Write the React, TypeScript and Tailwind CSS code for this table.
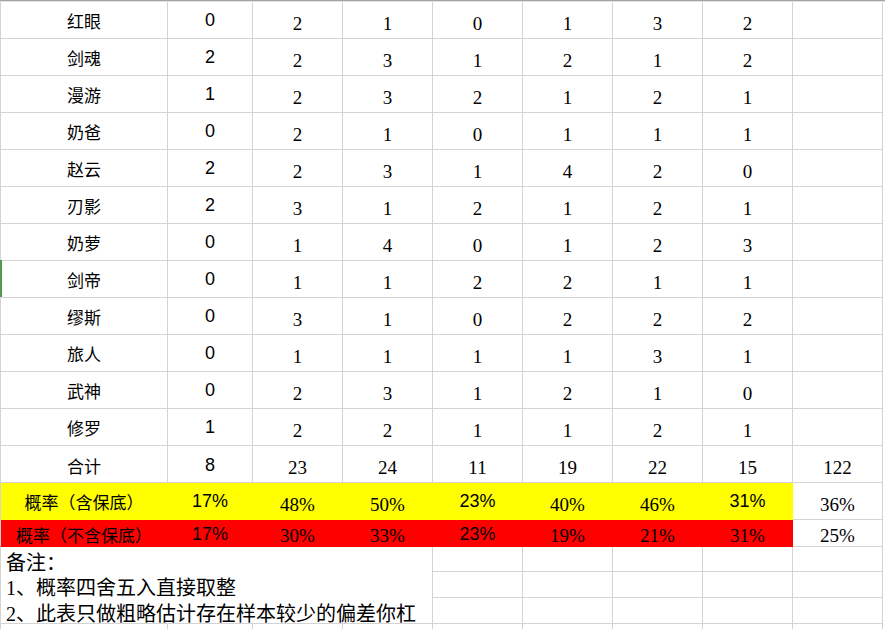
import React from "react";

const COLW = [
  "w-[168px]",
  "w-[85px]",
  "w-[90px]",
  "w-[90px]",
  "w-[90px]",
  "w-[90px]",
  "w-[90px]",
  "w-[90px]",
  "w-[90px]",
];

const CJK = "font-['Noto_Sans_CJK_SC','Noto_Sans',sans-serif]";
const SANS = "font-['Liberation_Sans','Noto_Sans_CJK_SC',sans-serif]";
const SERIF = "font-['Liberation_Serif','Noto_Sans_CJK_SC',serif]";

type Row = { name: string; vals: (number | string)[] };

const rows: Row[] = [
  { name: "红眼", vals: [0, 2, 1, 0, 1, 3, 2] },
  { name: "剑魂", vals: [2, 2, 3, 1, 2, 1, 2] },
  { name: "漫游", vals: [1, 2, 3, 2, 1, 2, 1] },
  { name: "奶爸", vals: [0, 2, 1, 0, 1, 1, 1] },
  { name: "赵云", vals: [2, 2, 3, 1, 4, 2, 0] },
  { name: "刃影", vals: [2, 3, 1, 2, 1, 2, 1] },
  { name: "奶萝", vals: [0, 1, 4, 0, 1, 2, 3] },
  { name: "剑帝", vals: [0, 1, 1, 2, 2, 1, 1] },
  { name: "缪斯", vals: [0, 3, 1, 0, 2, 2, 2] },
  { name: "旅人", vals: [0, 1, 1, 1, 1, 3, 1] },
  { name: "武神", vals: [0, 2, 3, 1, 2, 1, 0] },
  { name: "修罗", vals: [1, 2, 2, 1, 1, 2, 1] },
];

function Cell({
  col,
  h,
  children,
  extra = "",
}: {
  col: number;
  h: string;
  children?: React.ReactNode;
  extra?: string;
}) {
  return (
    <div
      className={`${COLW[col]} ${h} shrink-0 box-border border-r border-b flex items-center justify-center leading-none text-black ${extra}`}
    >
      {children}
    </div>
  );
}

export default function App() {
  const grid = "border-[#d4d4d4]";
  return (
    <div className="relative w-[885px] h-[629px] overflow-hidden bg-white">
      {/* top edge */}
      <div className="h-[1px] bg-[#a3a3a3]" />
      <div className="h-[1px] bg-[#e2e2e2]" />

      {rows.map((r) => (
        <div key={r.name} className="flex">
          <Cell col={0} h="h-[37px]" extra={`${grid} border-l text-[17px] ${CJK}`}>
            {r.name}
          </Cell>
          {r.vals.map((v, i) => (
            <Cell
              key={i}
              col={i + 1}
              h="h-[37px]"
              extra={
                i === 0
                  ? `${grid} text-[18px] ${SANS}`
                  : `${grid} text-[19px] pt-[6px] ${SERIF}`
              }
            >
              {v}
            </Cell>
          ))}
          <Cell col={8} h="h-[37px]" extra={grid} />
        </div>
      ))}

      {/* 合计 */}
      <div className="flex">
        <Cell col={0} h="h-[37px]" extra={`${grid} border-l text-[17px] pt-[3px] ${CJK}`}>
          合计
        </Cell>
        {[8, 23, 24, 11, 19, 22, 15, 122].map((v, i) => (
          <Cell
            key={i}
            col={i + 1}
            h="h-[37px]"
            extra={
              i === 0
                ? `${grid} text-[18px] pt-[2px] ${SANS}`
                : `${grid} text-[19px] pt-[6px] ${SERIF}`
            }
          >
            {v}
          </Cell>
        ))}
      </div>

      {/* yellow row */}
      <div className="flex">
        <Cell
          col={0}
          h="h-[37px]"
          extra={`border-[#ffff00] bg-[#ffff00] border-l border-l-[#d4d4d4] text-[17px] pt-[1px] ${CJK}`}
        >
          概率（含保底）
        </Cell>
        {["17%", "48%", "50%", "23%", "40%", "46%", "31%"].map((v, i) => {
          const sans = i === 0 || i === 3 || i === 6;
          return (
            <Cell
              key={i}
              col={i + 1}
              h="h-[37px]"
              extra={`border-[#ffff00] bg-[#ffff00] ${
                sans ? `text-[18px] ${SANS}` : `text-[19px] pt-[6px] ${SERIF}`
              }`}
            >
              {v}
            </Cell>
          );
        })}
        <Cell col={8} h="h-[37px]" extra={`${grid} text-[19px] pt-[6px] ${SERIF}`}>
          36%
        </Cell>
      </div>

      {/* red row */}
      <div className="flex">
        <Cell
          col={0}
          h="h-[27px]"
          extra={`border-[#ff0000] bg-[#ff0000] border-l border-l-[#d4d4d4] text-[17px] pt-[2px] ${CJK}`}
        >
          概率（不含保底）
        </Cell>
        {["17%", "30%", "33%", "23%", "19%", "21%", "31%"].map((v, i) => {
          const sans = i === 0 || i === 3;
          return (
            <Cell
              key={i}
              col={i + 1}
              h="h-[27px]"
              extra={`border-[#ff0000] bg-[#ff0000] ${
                sans
                  ? `text-[18px] pt-[1px] ${SANS}`
                  : `text-[19px] pt-[4px] ${SERIF} text-[#1a0000]`
              }`}
            >
              {v}
            </Cell>
          );
        })}
        <Cell col={8} h="h-[27px]" extra={`${grid} text-[19px] pt-[4px] ${SERIF}`}>
          25%
        </Cell>
      </div>

      {/* notes */}
      <div className="flex">
        <div
          className={`w-[433px] h-[77px] shrink-0 box-border border-l border-r border-b ${grid} text-[20px] leading-none text-black ${SERIF}`}
        >
          <div className="h-[25px] flex items-center pl-[5px] pt-[6px]">备注：</div>
          <div className="h-[26px] flex items-center pl-[5px] pt-[6px] whitespace-nowrap">
            1、概率四舍五入直接取整
          </div>
          <div className="h-[26px] flex items-center pl-[5px] pt-[6px] whitespace-nowrap">
            2、此表只做粗略估计存在样本较少的偏差你杠
          </div>
        </div>
        <div className="flex flex-col">
          {["h-[25px]", "h-[26px]", "h-[26px]"].map((h, k) => (
            <div key={k} className="flex">
              {[4, 5, 6, 7, 8].map((c) => (
                <Cell key={c} col={c} h={h} extra={grid} />
              ))}
            </div>
          ))}
        </div>
      </div>

      {/* partial last row */}
      <div className="flex">
        {[0, 1, 2, 3, 4, 5, 6, 7, 8].map((c) => (
          <Cell key={c} col={c} h="h-[6px]" extra={`${grid} ${c === 0 ? "border-l" : ""}`} />
        ))}
      </div>

      {/* row selection marker */}
      <div className="absolute left-0 top-[260px] w-[2px] h-[37px] bg-[#4f9a4f]" />
    </div>
  );
}
